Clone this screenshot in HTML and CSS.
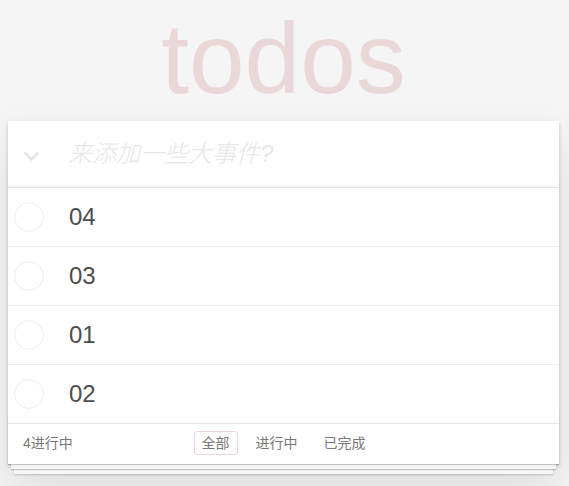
FILE: index.html
```html
<!DOCTYPE html>
<html lang="zh-CN">
<head>
<meta charset="utf-8">
<title>todos</title>
<link rel="stylesheet" href="styles.css">
</head>
<body>
<section class="todoapp">
  <header class="header">
    <h1 class="title">todos</h1>
    <div class="toggle-all">
      <svg width="17" height="10" viewBox="0 0 17 10"><polyline points="1.5,1.5 8.5,8.3 15.5,1.5" fill="none" stroke="#e4e4e4" stroke-width="2.6"/></svg>
    </div>
    <input class="new-todo" placeholder="来添加一些大事件?">
  </header>
  <section class="main">
    <ul class="todo-list">
      <li class="todo"><svg class="toggle" width="30" height="30" viewBox="0 0 30 30"><circle cx="15" cy="15" r="14.4" fill="none" stroke="#ededed" stroke-width="1"/></svg><label class="todo-label">04</label></li>
      <li class="todo"><svg class="toggle" width="30" height="30" viewBox="0 0 30 30"><circle cx="15" cy="15" r="14.4" fill="none" stroke="#ededed" stroke-width="1"/></svg><label class="todo-label">03</label></li>
      <li class="todo"><svg class="toggle" width="30" height="30" viewBox="0 0 30 30"><circle cx="15" cy="15" r="14.4" fill="none" stroke="#ededed" stroke-width="1"/></svg><label class="todo-label">01</label></li>
      <li class="todo"><svg class="toggle" width="30" height="30" viewBox="0 0 30 30"><circle cx="15" cy="15" r="14.4" fill="none" stroke="#ededed" stroke-width="1"/></svg><label class="todo-label">02</label></li>
    </ul>
  </section>
  <footer class="footer">
    <span class="todo-count">4进行中</span>
    <ul class="filters">
      <li><a class="selected">全部</a></li>
      <li><a>进行中</a></li>
      <li><a>已完成</a></li>
    </ul>
    <span class="spacer"></span>
  </footer>
</section>
</body>
</html>
```
FILE: styles.css
```css
html, body {
  margin: 0;
  padding: 0;
}
body {
  font: 14px "Liberation Sans", "Noto Sans CJK SC", sans-serif;
  line-height: 1.4em;
  background: #f5f5f5;
  color: #4d4d4d;
}
.todoapp {
  width: 551px;
  margin: 121px 0 40px 8px;
  background: #fff;
  position: relative;
  box-shadow: 0 2px 4px 0 rgba(0, 0, 0, 0.2), 0 25px 50px 0 rgba(0, 0, 0, 0.1);
}
.header {
  display: flex;
  align-items: center;
  box-shadow: inset 0 -2px 1px rgba(0, 0, 0, 0.03);
}
.title {
  position: absolute;
  top: -113px;
  left: 0;
  right: 0;
  margin: 0;
  font-size: 100px;
  line-height: 100px;
  font-weight: 100;
  text-align: center;
  color: rgba(175, 47, 47, 0.15);
}
.toggle-all {
  width: 60px;
  flex: none;
  box-sizing: border-box;
  padding-left: 15px;
  padding-top: 4px;
  display: flex;
}
.new-todo {
  flex: 1;
  min-width: 0;
  margin: 0;
  border: none;
  outline: none;
  background: transparent;
  padding: 16px 16px 16px 0;
  font: inherit;
  font-size: 24px;
  line-height: 34px;
  height: 66px;
  box-sizing: border-box;
  color: inherit;
}
.new-todo::placeholder {
  font-style: italic;
  font-weight: 300;
  color: #e6e6e6;
}
.main {
  position: relative;
  z-index: 2;
  border-top: 1px solid #e6e6e6;
}
.todo-list {
  margin: 0;
  padding: 0;
  list-style: none;
}
.todo {
  display: flex;
  align-items: center;
  height: 58px;
  font-size: 24px;
  background: #fff;
  border-bottom: 1px solid #ededed;
}
.todo:last-child {
  border-bottom: none;
}
.toggle {
  flex: none;
  margin: 0 25px 0 6px;
}
.todo-label {
  display: block;
  padding: 0 15px 0 0;
  line-height: 28px;
}
.footer {
  position: relative;
  color: #777;
  padding: 10px 15px;
  height: 20px;
  border-top: 1px solid #e6e6e6;
  display: grid;
  grid-template-columns: 1fr auto 1fr;
  align-items: center;
}
.footer::before {
  content: '';
  position: absolute;
  right: 0;
  bottom: 0;
  left: 0;
  height: 50px;
  overflow: hidden;
  box-shadow: 0 1px 1px rgba(0, 0, 0, 0.2),
              0 8px 0 -3px #f6f6f6,
              0 9px 1px -3px rgba(0, 0, 0, 0.2),
              0 16px 0 -6px #f6f6f6,
              0 17px 2px -6px rgba(0, 0, 0, 0.2);
}
.todo-count {
  text-align: left;
}
.filters {
  margin: 0;
  padding: 0;
  list-style: none;
}
.filters li {
  display: inline;
}
.filters a {
  color: inherit;
  margin: 3px;
  padding: 3px 7px;
  border: 1px solid transparent;
  border-radius: 3px;
}
.filters a.selected {
  border-color: rgba(175, 47, 47, 0.2);
}
```
